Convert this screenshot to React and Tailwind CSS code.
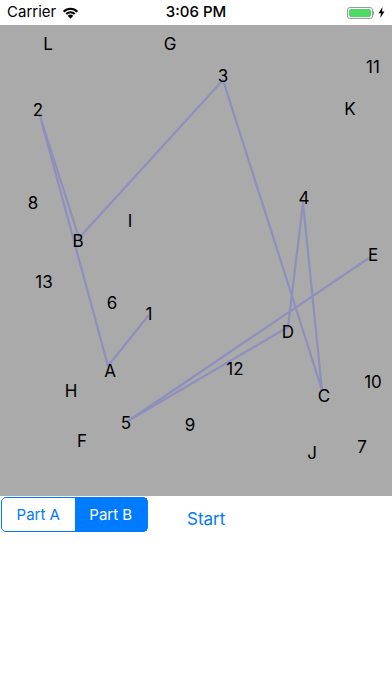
import React from 'react'

// Labels placed on the drawing canvas (canvas coords, y already offset from the status bar)
const labels = [
  ['L', 48, 19], ['G', 170, 19], ['3', 223, 51], ['11', 373, 42], ['2', 38, 85],
  ['K', 350, 84], ['8', 33, 178], ['4', 304, 173], ['I', 130, 196], ['B', 78, 216],
  ['E', 373, 230], ['13', 44, 257], ['6', 112, 278], ['1', 149, 289], ['D', 288, 307],
  ['A', 110, 346], ['12', 235, 344], ['H', 71, 366], ['10', 373, 357], ['C', 324, 371],
  ['5', 126, 398], ['9', 190, 400], ['F', 82, 416], ['J', 312, 428], ['7', 362, 422],
]

// Path drawn so far: 1 -> A -> 2 -> B -> 3 -> C -> 4 -> D -> 5 -> E
const path = [
  [148, 291], [108, 341], [40, 91], [79, 213], [223, 55], [322, 365],
  [303, 178], [288, 302], [128, 396], [369, 233],
]

function StatusBar() {
  return (
    <div className="relative flex h-[25px] items-center justify-between bg-white px-[7px] text-[15px] text-black">
      <div className="flex items-center gap-[6px]">
        <span>Carrier</span>
        <svg width="17" height="13" viewBox="0 0 16 12">
          <path d="M8 11.8 L5.4 9 A3.6 3.6 0 0 1 10.6 9 Z" fill="black" />
          <path d="M3.3 6.8 A6.5 6.5 0 0 1 12.7 6.8 L11.3 8.2 A4.5 4.5 0 0 0 4.7 8.2 Z" fill="black" />
          <path d="M0.9 4.5 A9.8 9.8 0 0 1 15.1 4.5 L13.7 5.9 A7.8 7.8 0 0 0 2.3 5.9 Z" fill="black" />
        </svg>
      </div>
      <span className="absolute left-1/2 -translate-x-1/2 font-medium">3:06 PM</span>
      <div className="flex items-center gap-[4px]">
        <div className="flex items-center">
          <div className="flex h-[12px] w-[26px] items-center rounded-[3px] border border-[#9a9a9a] p-[1px]">
            <div className="h-full w-full rounded-[2px] bg-[#4cd964]" />
          </div>
          <div className="h-[4px] w-[1.5px] rounded-r bg-[#9a9a9a]" />
        </div>
        <svg width="7" height="11" viewBox="0 0 7 11">
          <path d="M4.5 0 L0.5 6.2 H3 L2.3 11 L6.5 4.6 H4 Z" fill="black" />
        </svg>
      </div>
    </div>
  )
}

export default function App() {
  const points = path.map(([x, y]) => `${x},${y}`).join(' ')

  return (
    <div className="relative h-[696px] w-[392px] bg-white font-['Inter','Liberation_Sans',sans-serif]">
      <StatusBar />

      {/* Canvas */}
      <div className="relative h-[471px] w-full bg-[#aaaaaa]">
        <svg className="absolute inset-0" width="392" height="471">
          <polyline
            points={points}
            fill="none"
            stroke="rgba(60,60,255,0.24)"
            strokeWidth="2.2"
            strokeLinejoin="round"
            strokeLinecap="round"
          />
        </svg>
        {labels.map(([t, x, y]) => (
          <span
            key={t}
            className="absolute -translate-x-1/2 -translate-y-1/2 text-[17px] leading-none text-black"
            style={{ left: x, top: y }}
          >
            {t}
          </span>
        ))}
      </div>

      {/* Controls */}
      <div className="mt-[1px] flex items-center pl-[1px]">
        <div className="flex h-[35px] w-[147px] rounded-[5px] border border-solid border-[#007aff] bg-[#007aff] text-[15px]">
          <button className="flex flex-1 items-center justify-center rounded-l-[4px] border-0 bg-white text-[#007aff]">Part A</button>
          <button className="flex flex-1 items-center justify-center border-0 bg-[#007aff] text-white">Part B</button>
        </div>
        <button className="ml-[39px] pt-[10px] text-[17px] text-[#007aff]">Start</button>
      </div>
    </div>
  )
}
